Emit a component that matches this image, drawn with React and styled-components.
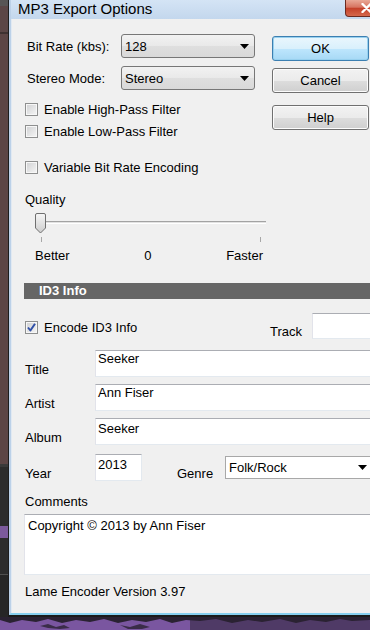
import React from "react";
import styled, { createGlobalStyle } from "styled-components";

const GlobalStyle = createGlobalStyle`
  html, body {
    margin: 0;
    padding: 0;
    width: 370px;
    height: 630px;
    overflow: hidden;
    background: #2b2b2b;
  }
  body {
    font-family: "Liberation Sans", Arial, sans-serif;
    font-size: 13px;
    color: #000;
  }
`;

const Desktop = styled.div`
  width: 370px;
  height: 630px;
  overflow: hidden;
  display: flex;
  flex-direction: column;
`;

const Upper = styled.div`
  display: flex;
  height: 617px;
  flex: 0 0 617px;
`;

const SideStrip = styled.div`
  flex: 0 0 8px;
  background: linear-gradient(
    to bottom,
    #575555 0 6px,
    #5b4646 6px 32px,
    #3e3131 32px 34px,
    #5c4545 34px 464px,
    #3a3a3a 464px 467px,
    #2c2c2c 467px 526px,
    #7c5a9c 526px 538px,
    #2c2c2c 538px 574px,
    #505050 574px 575px,
    #262626 575px
  );
`;

const Window = styled.div`
  flex: 0 0 392px;
  display: flex;
  flex-direction: column;
  border-left: 1px solid #1d1d1d;
  border-bottom: 2px solid #1b1b1b;
`;

const Frame = styled.div`
  flex: 1;
  display: flex;
  flex-direction: column;
  border-left: 2px solid #bcd1e8;
  border-bottom: 2px solid #86cfee;
  background: #c3d7ed;
`;

const TitleBar = styled.div`
  height: 19px;
  flex: 0 0 19px;
  display: flex;
  justify-content: space-between;
  align-items: flex-start;
  padding-left: 7px;
  background: linear-gradient(#d4e4f5, #c3d7ed);
`;

const TitleText = styled.div`
  font-size: 15px;
  line-height: 17px;
  color: #000;
`;

const CloseButton = styled.div`
  width: 43px;
  height: 17px;
  margin-right: 13px;
  box-sizing: border-box;
  border: 1px solid #6b2a20;
  border-top: none;
  border-radius: 0 0 4px 4px;
  background: linear-gradient(#e9a896, #d77460 45%, #c4412a 52%, #d5684c);
  display: flex;
  align-items: center;
  justify-content: center;
`;

const Client = styled.div`
  flex: 1;
  background: #f0f0f0;
  border-left: 1px solid #e1e9f2;
  padding: 15px 15px 0 13px;
  display: flex;
  flex-direction: column;
`;

const TopSection = styled.div`
  display: grid;
  grid-template-columns: 233px 97px;
  column-gap: 14px;
`;

const Column = styled.div`
  display: flex;
  flex-direction: column;
`;

const SelectRow = styled.div`
  display: flex;
  align-items: center;
  height: 24px;
  margin-top: ${(p) => p.$top || 0}px;
`;

const SelectLabel = styled.div`
  width: 94px;
  padding-left: 2px;
  line-height: 15px;
`;

const Select = styled.div`
  width: 134px;
  height: 24px;
  box-sizing: border-box;
  border: 1px solid #777;
  border-radius: 3px;
  background: linear-gradient(#f2f2f2, #e9e9e9 50%, #dfdfdf 51%, #d9d9d9);
  display: flex;
  align-items: center;
  justify-content: space-between;
  padding: 0 5px 0 3px;
  line-height: 15px;
`;

const CheckRow = styled.label`
  display: flex;
  align-items: center;
  height: 13px;
  line-height: 13px;
  margin-top: ${(p) => p.$top || 0}px;
  margin-bottom: ${(p) => p.$bottom || 0}px;
`;

const Box = styled.span`
  width: 13px;
  height: 13px;
  box-sizing: border-box;
  margin-right: 6px;
  border: 1px solid #8e8f8f;
  background: linear-gradient(135deg, #cfd0d2, #f6f6f6);
  box-shadow: inset 0 0 0 1px #f7f7f7;
  display: flex;
  align-items: center;
  justify-content: center;
`;

const Button = styled.div`
  height: 25px;
  box-sizing: border-box;
  margin-top: ${(p) => p.$top || 0}px;
  border: 1px solid ${(p) => (p.$default ? "#3c7fb1" : "#707070")};
  border-radius: 3px;
  background: ${(p) =>
    p.$default
      ? "linear-gradient(#eaf6fd, #d9f0fc 50%, #bee6fd 51%, #a7d9f5)"
      : "linear-gradient(#f2f2f2, #ebebeb 50%, #dddddd 51%, #cfcfcf)"};
  box-shadow: ${(p) => (p.$default ? "inset 0 0 0 1px #98d1ef" : "inset 0 0 0 1px #fcfcfc")};
  display: flex;
  align-items: center;
  justify-content: center;
  line-height: 15px;
`;

const Caption = styled.div`
  line-height: 15px;
  margin-top: ${(p) => p.$top || 0}px;
`;

const SliderArt = styled.svg`
  display: block;
  margin: 6px 0 0 10px;
`;

const ScaleLabels = styled.div`
  display: flex;
  justify-content: space-between;
  width: 228px;
  margin: 5px 0 0 10px;
  line-height: 15px;
`;

const SectionBar = styled.div`
  margin: 20px 0 0 -1px;
  height: 16px;
  line-height: 16px;
  padding-left: 15px;
  background: #666;
  color: #fff;
  font-weight: bold;
`;

const EncodeRow = styled.div`
  display: flex;
  align-items: flex-end;
  margin-top: 14px;
  height: 26px;
`;

const TrackLabel = styled.div`
  margin-left: auto;
  margin-right: 10px;
  line-height: 15px;
`;

const TextBox = styled.div`
  box-sizing: border-box;
  width: ${(p) => (p.$width ? `${p.$width}px` : "auto")};
  flex: ${(p) => (p.$width ? "0 0 auto" : "1")};
  height: ${(p) => p.$height || 27}px;
  background: #fff;
  border: 1px solid #e3e9ef;
  border-top-color: #abadb3;
  border-left-color: #e2e3ea;
  padding: ${(p) => p.$pad || 0}px 2px 0 2px;
  line-height: 15px;
`;

const FieldRow = styled.div`
  display: flex;
  align-items: flex-end;
  margin-top: ${(p) => p.$top || 7}px;
`;

const FieldLabel = styled.div`
  width: ${(p) => p.$width || 70}px;
  flex: 0 0 auto;
  margin-left: ${(p) => p.$left || 0}px;
  line-height: 15px;
`;

const Combo = styled.div`
  flex: 1;
  height: 23px;
  margin: 0 13px 2px 0;
  box-sizing: border-box;
  background: #fff;
  border: 1px solid #a8a8a8;
  border-right-color: #dcdcdc;
  display: flex;
  align-items: center;
  justify-content: space-between;
  padding: 0 5px 0 3px;
  line-height: 15px;
`;

const CommentBox = styled.div`
  margin: 5px 0 0 -1px;
  height: 61px;
  box-sizing: border-box;
  background: #fff;
  border: 1px solid #e3e9ef;
  border-top-color: #abadb3;
  border-left-color: #e2e3ea;
  padding: 3px 3px 0;
  line-height: 15px;
`;

const Arrow = () => (
  <svg width="9" height="5" viewBox="0 0 9 5">
    <polygon points="0,0 9,0 4.5,5" fill="#000" />
  </svg>
);

const Check = ({ checked }) => (
  <Box>
    {checked && (
      <svg width="11" height="11" viewBox="0 0 11 11">
        <path d="M2 5.5 L4.4 8.5 L9 1.8" fill="none" stroke="#3050a8" strokeWidth="2" strokeLinejoin="round" />
      </svg>
    )}
  </Box>
);

const Slider = () => (
  <SliderArt width="232" height="30" viewBox="0 0 232 30">
    <defs>
      <linearGradient id="thumb" x1="0" y1="0" x2="0" y2="1">
        <stop offset="0" stopColor="#f6f6f6" />
        <stop offset="1" stopColor="#cdcdcd" />
      </linearGradient>
    </defs>
    <rect x="5" y="8" width="226" height="1" fill="#a3a3a3" />
    <rect x="5" y="9" width="226" height="1" fill="#e2e2e2" />
    <rect x="5" y="10" width="226" height="1" fill="#ffffff" />
    <rect x="6" y="24" width="1" height="5" fill="#a7a7a7" />
    <rect x="225" y="24" width="1" height="5" fill="#a7a7a7" />
    <path d="M2 0.5 H9 Q10.5 0.5 10.5 2 V15 L5.5 20 L0.5 15 V2 Q0.5 0.5 2 0.5 Z" fill="url(#thumb)" stroke="#6f6f6f" />
  </SliderArt>
);

const BottomStrip = () => (
  <svg width="370" height="13" viewBox="0 0 370 13" style={{ display: "block", flex: "0 0 13px" }}>
    <rect width="370" height="13" fill="#4f3a66" />
    <rect width="190" height="13" fill="#7a56a0" />
    <path
      d="M0 0 H370 V3 L352 4 L340 2 L326 5 L310 3 L296 6 L280 2 L262 5 L248 3 L232 6 L216 2 L200 4 L186 3 L172 6 L160 2 L146 5 L132 3 L118 6 L104 2 L90 5 L76 3 L62 6 L48 2 L36 5 L22 3 L10 6 L0 3 Z"
      fill="#2a2232"
    />
    <path d="M40 9 L48 7 L56 10 L64 8 L70 11 L60 12 L48 11 Z" fill="#3a2c48" />
    <path d="M120 8 L130 10 L140 7 L150 10 L142 12 L128 12 Z" fill="#3a2c48" />
  </svg>
);

export default function App() {
  return (
    <>
      <GlobalStyle />
      <Desktop>
        <Upper>
          <SideStrip />
          <Window>
            <Frame>
              <TitleBar>
                <TitleText>MP3 Export Options</TitleText>
                <CloseButton>
                  <svg width="11" height="10" viewBox="0 0 11 10">
                    <path d="M1.5 1 L9.5 9 M9.5 1 L1.5 9" stroke="#fff" strokeWidth="2.4" strokeLinecap="round" />
                  </svg>
                </CloseButton>
              </TitleBar>
              <Client>
                <TopSection>
                  <Column>
                    <SelectRow>
                      <SelectLabel>Bit Rate (kbs):</SelectLabel>
                      <Select>
                        <span>128</span>
                        <Arrow />
                      </Select>
                    </SelectRow>
                    <SelectRow $top={8}>
                      <SelectLabel>Stereo Mode:</SelectLabel>
                      <Select>
                        <span>Stereo</span>
                        <Arrow />
                      </Select>
                    </SelectRow>
                    <CheckRow $top={13}>
                      <Check />
                      Enable High-Pass Filter
                    </CheckRow>
                    <CheckRow $top={9}>
                      <Check />
                      Enable Low-Pass Filter
                    </CheckRow>
                    <CheckRow $top={23}>
                      <Check />
                      Variable Bit Rate Encoding
                    </CheckRow>
                  </Column>
                  <Column>
                    <Button $top={2} $default>OK</Button>
                    <Button $top={7}>Cancel</Button>
                    <Button $top={12}>Help</Button>
                  </Column>
                </TopSection>

                <Caption $top={18}>Quality</Caption>
                <Slider />
                <ScaleLabels>
                  <span>Better</span>
                  <span>0</span>
                  <span>Faster</span>
                </ScaleLabels>

                <SectionBar>ID3 Info</SectionBar>

                <EncodeRow>
                  <CheckRow $bottom={5}>
                    <Check checked />
                    Encode ID3 Info
                  </CheckRow>
                  <TrackLabel>Track</TrackLabel>
                  <TextBox $width={74} $height={26} />
                </EncodeRow>

                <FieldRow $top={11}>
                  <FieldLabel>Title</FieldLabel>
                  <TextBox>Seeker</TextBox>
                </FieldRow>
                <FieldRow>
                  <FieldLabel>Artist</FieldLabel>
                  <TextBox>Ann Fiser</TextBox>
                </FieldRow>
                <FieldRow>
                  <FieldLabel>Album</FieldLabel>
                  <TextBox $pad={2}>Seeker</TextBox>
                </FieldRow>
                <FieldRow $top={9}>
                  <FieldLabel>Year</FieldLabel>
                  <TextBox $width={47} $pad={2}>2013</TextBox>
                  <FieldLabel $width={48} $left={35}>Genre</FieldLabel>
                  <Combo>
                    <span>Folk/Rock</span>
                    <Arrow />
                  </Combo>
                </FieldRow>

                <Caption $top={13}>Comments</Caption>
                <CommentBox>Copyright © 2013 by Ann Fiser</CommentBox>
                <Caption $top={9}>Lame Encoder Version 3.97</Caption>
              </Client>
            </Frame>
          </Window>
        </Upper>
        <BottomStrip />
      </Desktop>
    </>
  );
}
